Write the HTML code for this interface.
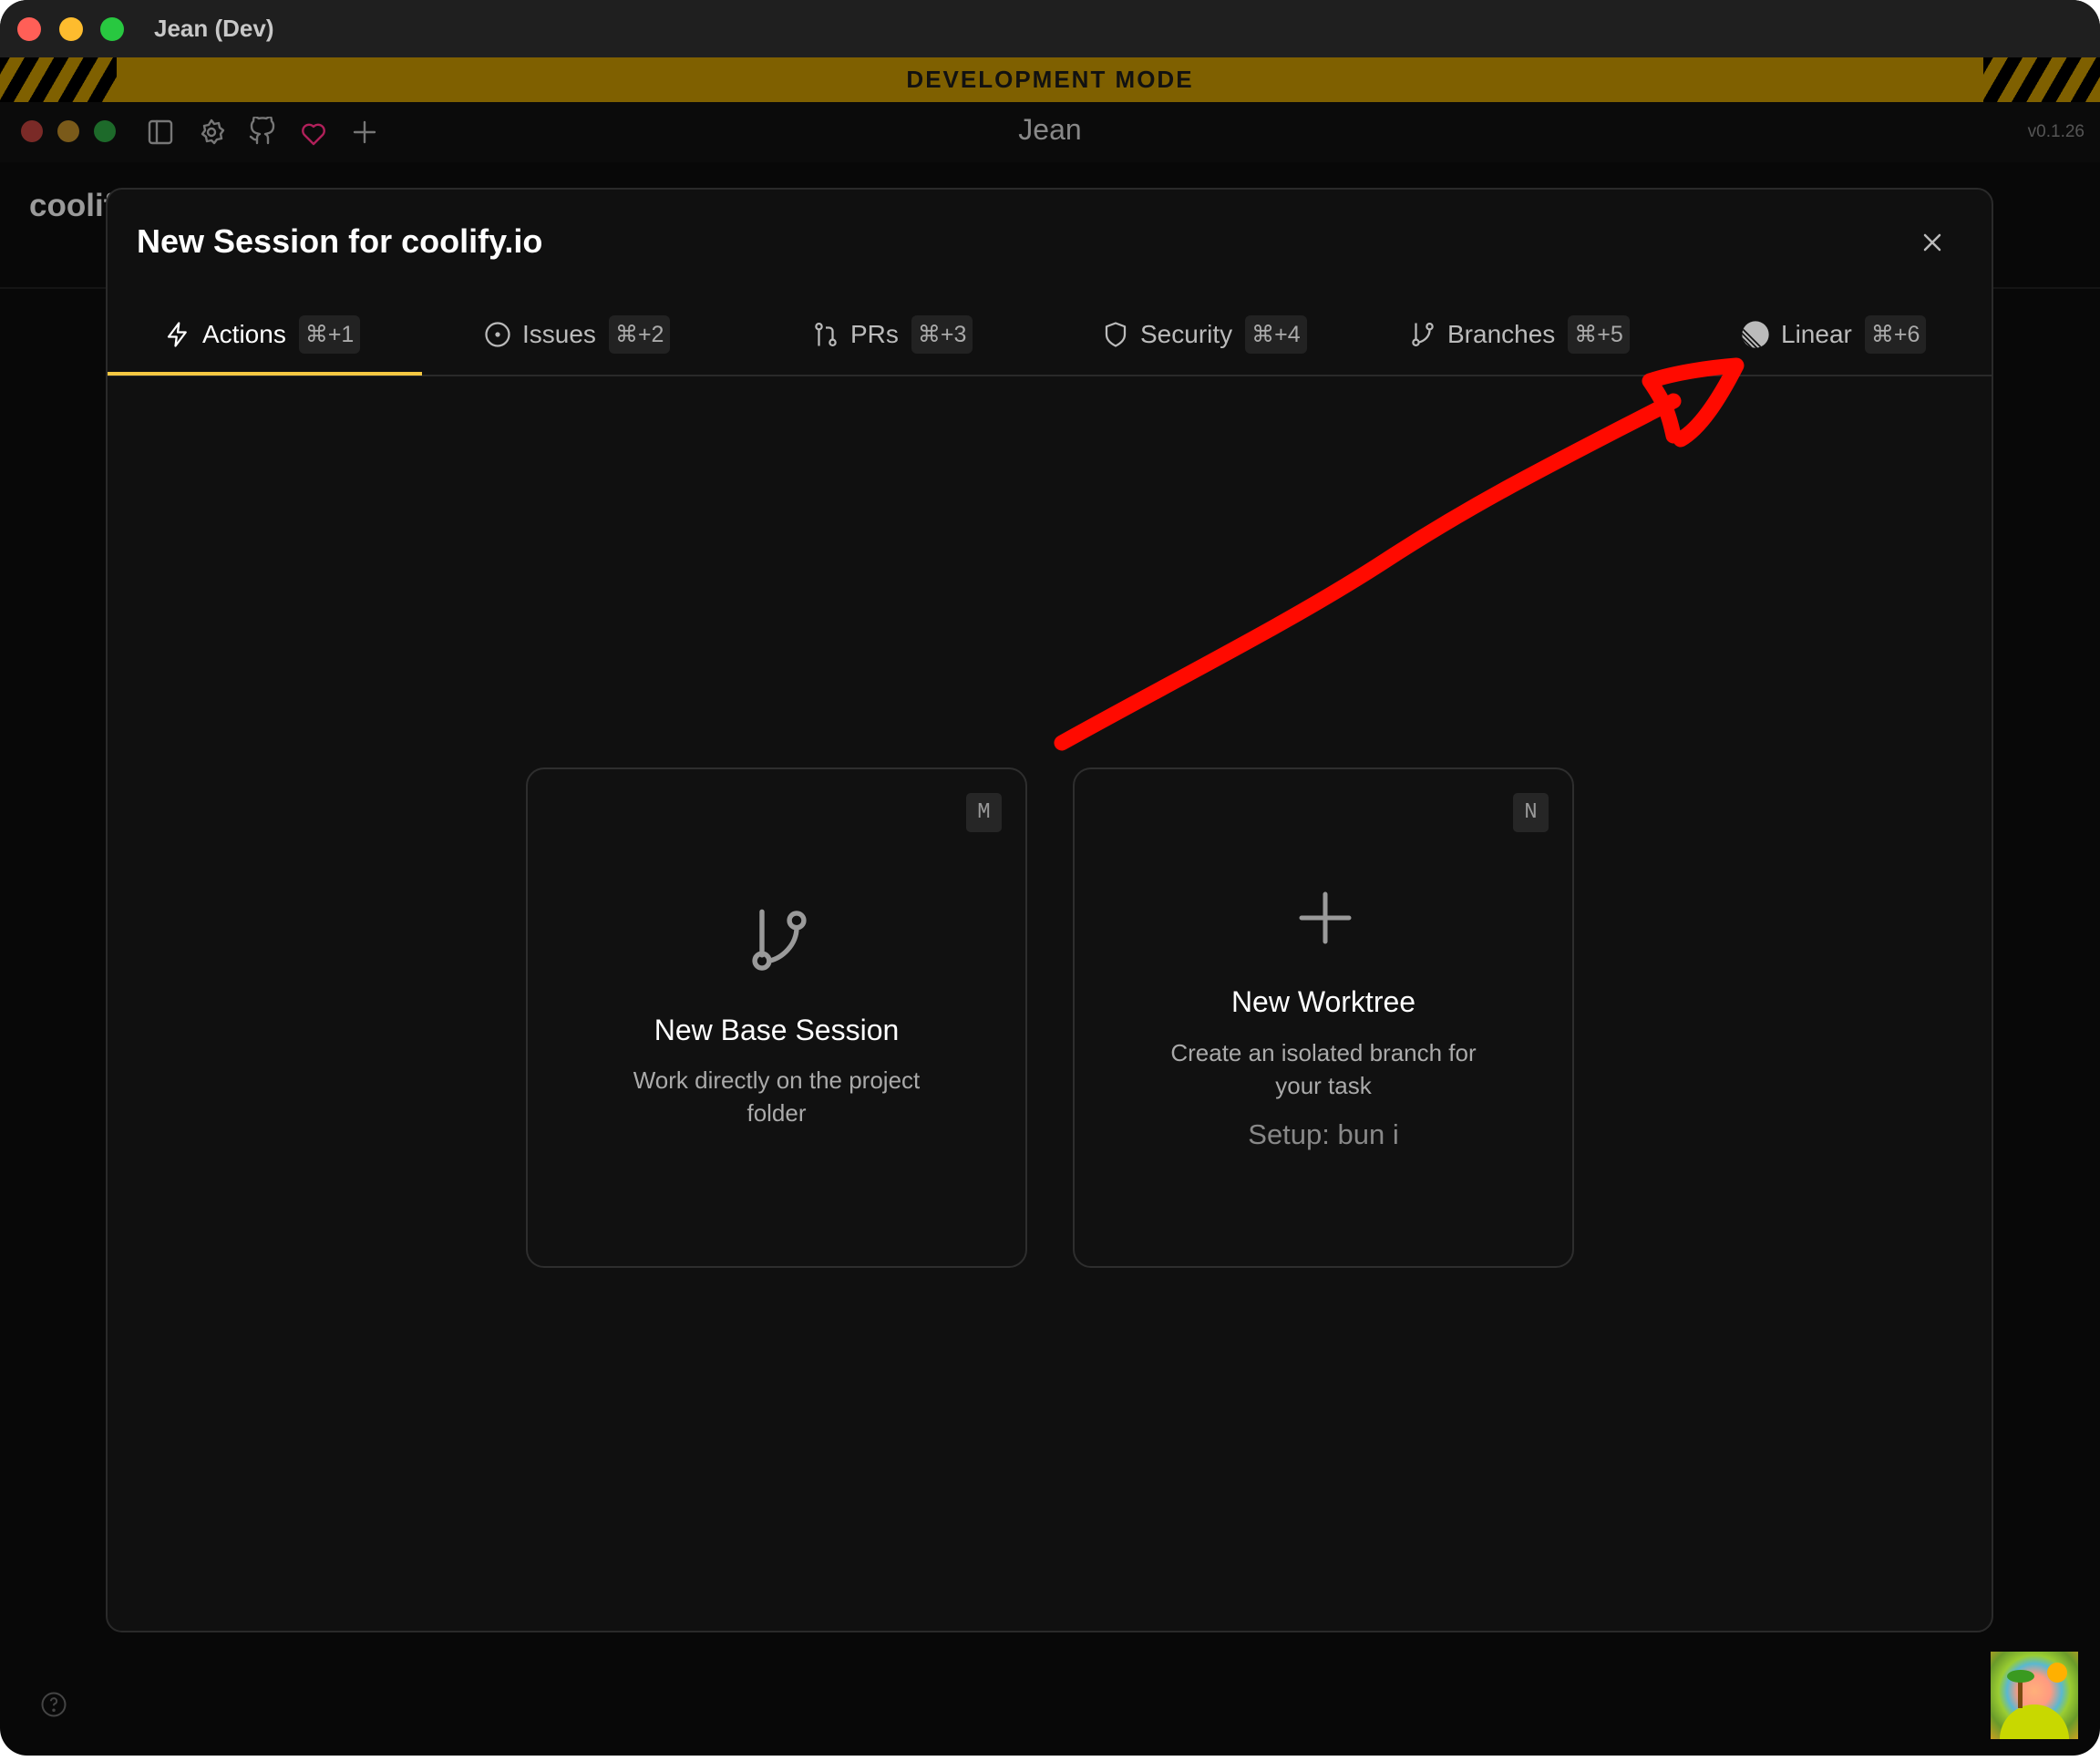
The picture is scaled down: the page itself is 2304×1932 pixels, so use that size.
<!DOCTYPE html>
<html><head><meta charset="utf-8">
<style>
*{margin:0;padding:0;box-sizing:border-box}
html,body{width:2304px;height:1932px;background:#fff;overflow:hidden;font-family:"Liberation Sans",sans-serif}
#win{position:absolute;left:0;top:0;width:2304px;height:1926px;border-radius:30px;background:#080808;overflow:hidden}
#tb{position:absolute;left:0;top:0;width:100%;height:63px;background:#1f1f1f}
.dot{position:absolute;border-radius:50%}
#banner{position:absolute;left:0;top:63px;width:100%;height:49px;background:#7f6000;text-align:center;font-weight:bold;font-size:26px;letter-spacing:2px;line-height:49px;color:#111}
.stripes{position:absolute;top:0;width:128px;height:49px;background:repeating-linear-gradient(-60deg,#7f6000 0 14px,#000 14px 28px)}
#tool{position:absolute;left:0;top:112px;width:100%;height:66px;background:#0b0b0b}
#modal{position:absolute;left:116px;top:206px;width:2071px;height:1585px;background:#101010;border:2px solid #2a2a2a;border-radius:18px}
.tab{position:absolute;top:345px;height:44px;display:flex;align-items:center;font-size:28px;color:#bbb}
.kbd{background:#222;border-radius:6px;height:42px;padding:0 7px;display:flex;align-items:center;font-size:25px;color:#aaa;margin-left:14px}
.tab svg{margin-right:12px}
.card{position:absolute;top:842px;width:550px;height:549px;border:2px solid #2e2e2e;border-radius:20px;background:#111;text-align:center}
.ck{position:absolute;top:26px;right:26px;width:39px;height:43px;background:#262626;border-radius:5px;color:#999;font-family:"Liberation Mono",monospace;font-size:24px;line-height:43px}
.ct{position:absolute;left:0;width:100%;font-size:32px;color:#fff}
.cd{position:absolute;left:0;width:100%;font-size:26px;color:#aaa;line-height:36px}
</style></head><body>
<div id="win">
<div id="tb">
<div class="dot" style="left:19px;top:19px;width:26px;height:26px;background:#ff5f57"></div>
<div class="dot" style="left:65px;top:19px;width:26px;height:26px;background:#febc2e"></div>
<div class="dot" style="left:110px;top:19px;width:26px;height:26px;background:#28c840"></div>
<div style="position:absolute;left:169px;top:16px;font-size:26px;font-weight:bold;color:#c8c8c8">Jean (Dev)</div>
</div>
<div id="banner"><div class="stripes" style="left:0"></div><div class="stripes" style="right:0"></div>DEVELOPMENT MODE</div>
<div id="tool">
<div class="dot" style="left:23px;top:20px;width:24px;height:24px;background:#7a2a27"></div>
<div class="dot" style="left:63px;top:20px;width:24px;height:24px;background:#7a5a1a"></div>
<div class="dot" style="left:103px;top:20px;width:24px;height:24px;background:#1d6a2a"></div>
<svg style="position:absolute;left:160px;top:16px" width="420" height="34" viewBox="0 0 420 34" fill="none" stroke="#777" stroke-width="2.4" stroke-linecap="round" stroke-linejoin="round">
<rect x="4" y="5" width="24" height="24" rx="3"/><line x1="12" y1="5" x2="12" y2="29"/>
<circle cx="72" cy="17" r="4"/><path d="M72 4l3 4 5-1 1 5 4 3-3 4 1 5-5 1-3 4-3-3-5 1-1-5-4-3 3-4-1-5 5-1z"/>
<path d="M122 29v-5c0-3 1-4 3-5-6-1-9-3-9-9 0-2 1-4 2-5 0-2 0-3 1-5 2 0 3 1 5 2a14 14 0 0 1 8 0c2-1 3-2 5-2 1 2 1 3 1 5 1 1 2 3 2 5 0 6-3 8-9 9 2 1 3 2 3 5v5M122 25c-4 1-5-2-7-3"/>
<path d="M184 30l-10-10a6 6 0 0 1 10-9 6 6 0 0 1 10 9z" stroke="#b0205a"/>
<path d="M240 6v22M229 17h22"/>
</svg>
<div style="position:absolute;left:0;width:100%;top:12px;text-align:center;font-size:32px;color:#888">Jean</div>
<div style="position:absolute;right:17px;top:22px;font-size:19px;color:#555">v0.1.26</div>
</div>
<div style="position:absolute;left:32px;top:206px;font-size:35px;font-weight:bold;color:#9a9a9a">coolify</div>
<div style="position:absolute;left:0;top:315px;width:100%;height:2px;background:#151515"></div>

<div id="modal">
<div style="position:absolute;left:32px;top:36px;font-size:36px;font-weight:bold;color:#fff">New Session for coolify.io</div>
<svg style="position:absolute;left:1988px;top:44px" width="28" height="28" viewBox="0 0 28 28" stroke="#bbb" stroke-width="2.5" stroke-linecap="round"><path d="M6 6l16 16M22 6L6 22"/></svg>
<div style="position:absolute;left:0;top:203px;width:100%;height:2px;background:#2a2a2a"></div>
<div style="position:absolute;left:0;top:200px;width:345px;height:4px;background:#f5c842"></div>
</div>

<div class="tab" style="left:180px;color:#fff"><svg width="30" height="32" viewBox="0 0 24 24" fill="none" stroke="#fff" stroke-width="1.8" stroke-linejoin="round"><path d="M13 2L4 14h7l-1 8 9-12h-7z"/></svg>Actions<span class="kbd">⌘+1</span></div>
<div class="tab" style="left:531px"><svg width="30" height="30" viewBox="0 0 24 24" fill="none" stroke="#bbb" stroke-width="1.8"><circle cx="12" cy="12" r="10"/><circle cx="12" cy="12" r="1.2" fill="#bbb"/></svg>Issues<span class="kbd">⌘+2</span></div>
<div class="tab" style="left:891px"><svg width="30" height="30" viewBox="0 0 24 24" fill="none" stroke="#bbb" stroke-width="1.8"><circle cx="6" cy="5" r="2.5"/><path d="M6 8v14"/><circle cx="18" cy="19" r="2.5"/><path d="M18 16V9a3 3 0 0 0-3-3h-3"/></svg>PRs<span class="kbd">⌘+3</span></div>
<div class="tab" style="left:1209px"><svg width="30" height="30" viewBox="0 0 24 24" fill="none" stroke="#bbb" stroke-width="1.8" stroke-linejoin="round"><path d="M12 2l8 3v7c0 5-4 8-8 10-4-2-8-5-8-10V5z"/></svg>Security<span class="kbd">⌘+4</span></div>
<div class="tab" style="left:1546px"><svg width="30" height="30" viewBox="0 0 24 24" fill="none" stroke="#bbb" stroke-width="1.8"><path d="M6 2v14"/><circle cx="6" cy="19" r="2.5"/><circle cx="18" cy="5" r="2.5"/><path d="M18 8c0 6-5 10-10 11"/></svg>Branches<span class="kbd">⌘+5</span></div>
<div class="tab" style="left:1910px"><svg width="32" height="32" viewBox="0 0 24 24"><defs><clipPath id="c"><circle cx="12" cy="12" r="11"/></clipPath></defs><circle cx="12" cy="12" r="11" fill="#bbb"/><g clip-path="url(#c)" stroke="#101010" stroke-width="1.3"><path d="M-2 8l18 18M-2 12l14 14M-2 16l10 10M-2 4l22 22"/></g></svg>Linear<span class="kbd">⌘+6</span></div>

<div class="card" style="left:577px">
<div class="ck">M</div>
<svg style="position:absolute;left:238px;top:150px" width="76" height="76" viewBox="0 0 24 24" fill="none" stroke="#9a9a9a" stroke-width="1.7" stroke-linecap="round"><path d="M6 2v15"/><circle cx="6" cy="19" r="2.5"/><circle cx="18" cy="5" r="2.5"/><path d="M18 7.5c0 6-5 10.5-9.5 11.5"/></svg>
<div class="ct" style="top:268px">New Base Session</div>
<div class="cd" style="top:323px">Work directly on the project<br>folder</div>
</div>
<div class="card" style="left:1177px">
<div class="ck">N</div>
<svg style="position:absolute;left:245px;top:133px" width="60" height="60" viewBox="0 0 60 60" stroke="#9a9a9a" stroke-width="5" stroke-linecap="round"><path d="M30 4v52M4 30h52"/></svg>
<div class="ct" style="top:237px">New Worktree</div>
<div class="cd" style="top:293px">Create an isolated branch for<br>your task</div>
<div class="cd" style="top:383px;font-size:31px;color:#888">Setup: bun i</div>
</div>

<svg style="position:absolute;left:0;top:0" width="2304" height="1932" fill="none" stroke="#ff0a00" stroke-width="17" stroke-linecap="round" stroke-linejoin="round">
<path d="M1165 815C1300 740 1420 680 1520 615S1700 510 1836 440"/>
<path d="M1836 478C1830 450 1825 440 1810 418C1840 408 1880 403 1905 401C1885 440 1865 470 1844 482"/>
</svg>

<svg style="position:absolute;left:44px;top:1855px" width="30" height="30" viewBox="0 0 24 24" fill="none" stroke="#444" stroke-width="1.6"><circle cx="12" cy="12" r="10"/><path d="M9.5 9a2.5 2.5 0 1 1 3 2.5c-.5.2-.5.8-.5 1.5"/><circle cx="12" cy="17" r=".6" fill="#444"/></svg>

<div style="position:absolute;left:2184px;top:1812px;width:96px;height:96px;background:radial-gradient(circle at 50% 45%,#ffb07a 0,#ff9a80 25%,#5ab8d0 42%,#9acd32 55%,#6a9a2a 75%,#c8a020 100%)">
<div style="position:absolute;left:62px;top:12px;width:22px;height:22px;border-radius:50%;background:#ffb000"></div>
<div style="position:absolute;left:10px;top:58px;width:76px;height:38px;border-radius:38px 38px 0 0;background:#c8d800"></div>
<div style="position:absolute;left:30px;top:24px;width:5px;height:38px;background:#7a4a10"></div>
<div style="position:absolute;left:18px;top:20px;width:30px;height:14px;border-radius:50%;background:#3a9a20"></div>
</div>
</div>
</body></html>
